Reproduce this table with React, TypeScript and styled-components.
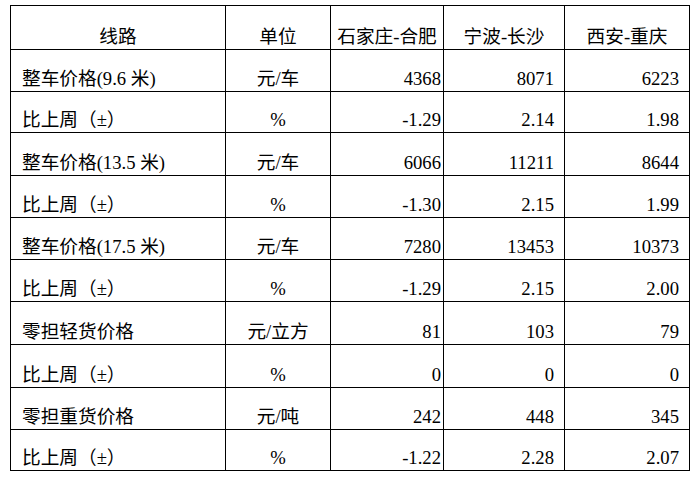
import React from "react";
import styled, { createGlobalStyle } from "styled-components";

const Global = createGlobalStyle`
  html, body { margin: 0; padding: 0; background: #fff; }
  body { font-family: "Liberation Serif", "Noto Sans CJK SC", serif; color: #000; }
`;

const Page = styled.div`
  padding: 5px 0 0 10px;
`;

const Table = styled.table`
  border-collapse: collapse;
  table-layout: fixed;
  width: 680px;
  font-size: 14pt;
`;

const Row = styled.tr<{ $h: number }>`
  height: ${(p) => p.$h}px;
`;

const HeadCell = styled.th`
  border: 1px solid #000;
  font-weight: normal;
  text-align: center;
  vertical-align: bottom;
  padding: 0 0 1px 0;
  line-height: 22px;
  white-space: nowrap;
`;

const NameCell = styled.td`
  border: 1px solid #000;
  text-align: left;
  vertical-align: bottom;
  padding: 0 0 1px 11px;
  line-height: 22px;
  white-space: nowrap;
`;

const UnitCell = styled.td`
  border: 1px solid #000;
  text-align: center;
  vertical-align: bottom;
  padding: 0 0 1px 0;
  line-height: 22px;
  white-space: nowrap;
`;

const NumCell = styled.td<{ $pad: number }>`
  border: 1px solid #000;
  text-align: right;
  vertical-align: bottom;
  padding: 0 ${(p) => p.$pad}px 1px 0;
  line-height: 22px;
  white-space: nowrap;
`;

const heights = [44, 42, 41, 43, 42, 42, 42, 43, 43, 42, 41];

const rows: [string, string, string, string, string][] = [
  ["整车价格(9.6 米)", "元/车", "4368", "8071", "6223"],
  ["比上周（±）", "%", "-1.29", "2.14", "1.98"],
  ["整车价格(13.5 米)", "元/车", "6066", "11211", "8644"],
  ["比上周（±）", "%", "-1.30", "2.15", "1.99"],
  ["整车价格(17.5 米)", "元/车", "7280", "13453", "10373"],
  ["比上周（±）", "%", "-1.29", "2.15", "2.00"],
  ["零担轻货价格", "元/立方", "81", "103", "79"],
  ["比上周（±）", "%", "0", "0", "0"],
  ["零担重货价格", "元/吨", "242", "448", "345"],
  ["比上周（±）", "%", "-1.22", "2.28", "2.07"],
];

export default function App() {
  return (
    <Page>
      <Global />
      <Table>
        <colgroup>
          <col style={{ width: 215 }} />
          <col style={{ width: 105 }} />
          <col style={{ width: 113 }} />
          <col style={{ width: 121 }} />
          <col style={{ width: 125 }} />
        </colgroup>
        <thead>
          <Row $h={heights[0]}>
            <HeadCell>线路</HeadCell>
            <HeadCell>单位</HeadCell>
            <HeadCell>石家庄-合肥</HeadCell>
            <HeadCell>宁波-长沙</HeadCell>
            <HeadCell>西安-重庆</HeadCell>
          </Row>
        </thead>
        <tbody>
          {rows.map((r, i) => (
            <Row key={i} $h={heights[i + 1]}>
              <NameCell>{r[0]}</NameCell>
              <UnitCell>{r[1]}</UnitCell>
              <NumCell $pad={2}>{r[2]}</NumCell>
              <NumCell $pad={10}>{r[3]}</NumCell>
              <NumCell $pad={10}>{r[4]}</NumCell>
            </Row>
          ))}
        </tbody>
      </Table>
    </Page>
  );
}
